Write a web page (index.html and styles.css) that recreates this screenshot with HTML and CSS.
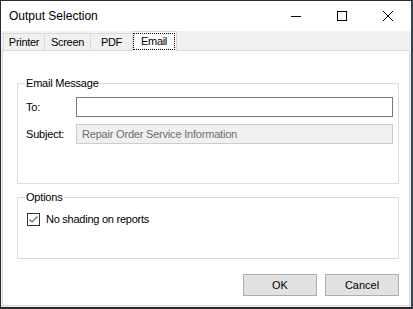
FILE: index.html
```html
<!DOCTYPE html>
<html lang="en">
<head>
<meta charset="utf-8">
<title>Output Selection</title>
<link rel="stylesheet" href="styles.css">
</head>
<body>
<div class="window">
  <div class="titlebar">
    <div class="title">Output Selection</div>
    <div class="caption">
      <div class="cap-btn">
        <svg width="10" height="10" viewBox="0 0 10 10"><line x1="0" y1="5.5" x2="10" y2="5.5" stroke="#000" stroke-width="1"/></svg>
      </div>
      <div class="cap-btn">
        <svg width="10" height="10" viewBox="0 0 10 10"><rect x="0.5" y="0.5" width="9" height="9" fill="none" stroke="#000" stroke-width="1"/></svg>
      </div>
      <div class="cap-btn">
        <svg width="10" height="10" viewBox="0 0 10 10"><path d="M0 0 L10 10 M10 0 L0 10" stroke="#000" stroke-width="1" fill="none"/></svg>
      </div>
    </div>
  </div>
  <div class="tabs">
    <div class="tab tab-printer">Printer</div>
    <div class="tab tab-screen">Screen</div>
    <div class="tab tab-pdf">PDF</div>
    <div class="tab tab-email selected"><span class="focus">Email</span></div>
  </div>
  <div class="panel">
    <fieldset class="group group-email">
      <legend>Email Message</legend>
      <div class="row">
        <span class="label">To:</span>
        <div class="input"></div>
      </div>
      <div class="row">
        <span class="label">Subject:</span>
        <div class="input disabled">Repair Order Service Information</div>
      </div>
    </fieldset>
    <fieldset class="group group-options">
      <legend>Options</legend>
      <div class="check-row">
        <span class="checkbox">
          <svg width="13" height="13" viewBox="0 0 13 13"><rect x="0.5" y="0.5" width="12" height="12" fill="#fff" stroke="#333" stroke-width="1"/><path d="M2.5 6.5 L5 9 L10.5 3.5" fill="none" stroke="#666" stroke-width="1.2"/></svg>
        </span>
        <span class="check-label">No shading on reports</span>
      </div>
    </fieldset>
    <div class="buttons">
      <div class="btn">OK</div>
      <div class="btn">Cancel</div>
    </div>
  </div>
</div>
</body>
</html>
```
FILE: styles.css
```css
* { box-sizing: border-box; }
html, body { margin: 0; padding: 0; background: #fff; }
body {
  font-family: "Liberation Sans", Arial, sans-serif;
  font-size: 11px;
  color: #000;
}
.window {
  width: 413px;
  height: 309px;
  display: flex;
  flex-direction: column;
  background: #f0f0f0;
  border-top: 1px solid #2b2b2b;
  border-left: 1px solid #2b2b2b;
  border-right: 2px solid #3a4350;
  border-bottom: 2px solid #2b2b2b;
}
.titlebar {
  height: 30px;
  display: flex;
  align-items: center;
  background: #fff;
  flex: none;
}
.title {
  flex: 1;
  padding-left: 8px;
  font-size: 12px;
  letter-spacing: 0;
}
.caption { display: flex; height: 30px; }
.cap-btn {
  width: 46px;
  height: 30px;
  display: flex;
  align-items: center;
  justify-content: center;
}
.cap-btn svg { display: block; }
.tabs {
  height: 19px;
  display: flex;
  align-items: flex-start;
  padding-left: 2px;
  flex: none;
}
.tab {
  margin-top: 2px;
  height: 18px;
  border: 1px solid #d9d9d9;
  border-bottom: none;
  background: #f0f0f0;
  margin-right: -1px;
  text-align: center;
  line-height: 16px;
  letter-spacing: -0.3px;
}
.tab-printer { width: 42px; }
.tab-screen { width: 47px; }
.tab-pdf { width: 43px; }
.tab-email { width: 45px; }
.tab.selected {
  position: relative;
  z-index: 1;
  margin-top: 0;
  height: 20px;
  margin-bottom: -1px;
  background: #fff;
  padding: 1px 1px 0 0;
}
.focus {
  display: block;
  height: 17px;
  border: 1px dotted #000;
  line-height: 14px;
}
.panel {
  flex: 1;
  margin: 0 1px 1px 1px;
  border: 1px solid #d9d9d9;
  background: #fff;
  padding: 25px 10px 0 14px;
  display: flex;
  flex-direction: column;
}
.group {
  margin: 0;
  border: 1px solid #dcdcdc;
  min-width: 0;
}
.group legend {
  padding: 0 1px;
  margin-left: -1px;
  line-height: 14px;
  letter-spacing: -0.2px;
}
.group-email { padding: 7px 5px 39px 8px; }
.group-options { margin-top: 6px; padding: 8px 5px 32px 8px; }
.row {
  display: flex;
  align-items: center;
  height: 20px;
}
.row + .row { margin-top: 7px; }
.label { width: 50px; flex: none; letter-spacing: -0.2px; }
.input {
  flex: 1;
  height: 20px;
  border: 1px solid #7a7a7a;
  background: #fff;
  padding-left: 5px;
  line-height: 18px;
}
.input.disabled {
  border-color: #cccccc;
  background: #f0f0f0;
  color: #6d6d6d;
  letter-spacing: -0.2px;
}
.check-row {
  display: flex;
  align-items: center;
  height: 14px;
  padding-left: 1px;
}
.checkbox { width: 13px; height: 13px; flex: none; }
.checkbox svg { display: block; }
.check-label { margin-left: 6px; letter-spacing: -0.25px; }
.buttons {
  margin-top: 15px;
  display: flex;
  justify-content: flex-end;
  gap: 8px;
}
.btn {
  width: 74px;
  height: 22px;
  border: 1px solid #adadad;
  background: #e1e1e1;
  text-align: center;
  line-height: 20px;
}
```
